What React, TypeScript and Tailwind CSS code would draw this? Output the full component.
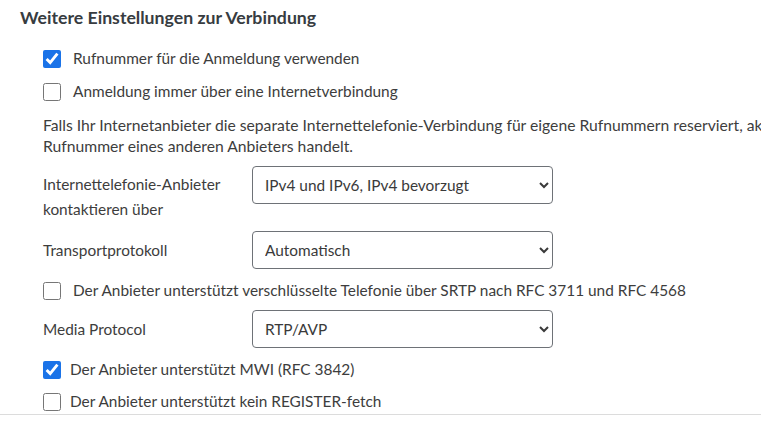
import { useState } from "react";

interface CheckRowProps {
  label: string;
  checked?: boolean;
  gap: string;
  className?: string;
}

function CheckRow({ label, checked, gap, className }: CheckRowProps) {
  const [on, setOn] = useState(!!checked);
  return (
    <label className={`flex items-center h-6 ${gap} ${className ?? ""}`}>
      <input
        type="checkbox"
        checked={on}
        onChange={() => setOn(!on)}
        className="w-[18px] h-[18px] m-0 accent-[#1a73e8] shrink-0"
      />
      <span className="whitespace-nowrap">{label}</span>
    </label>
  );
}

interface SelectRowProps {
  label: React.ReactNode;
  value: string;
  options: string[];
  className?: string;
  alignTop?: boolean;
}

function SelectRow({ label, value, options, className, alignTop }: SelectRowProps) {
  return (
    <div className={`flex ${alignTop ? "items-start" : "items-center"} ${className ?? ""}`}>
      <div className={`w-[209px] shrink-0 leading-[25px] ${alignTop ? "pt-[6px]" : ""}`}>{label}</div>
      <select
        defaultValue={value}
        className="w-[301px] h-[38px] border border-[#6e7277] rounded-[4px] pl-2 pr-2 bg-white text-[#3a3a3a]"
      >
        {options.map((o) => (
          <option key={o}>{o}</option>
        ))}
      </select>
    </div>
  );
}

export default function App() {
  return (
    <div
      className="w-[761px] h-[433px] overflow-hidden bg-white text-[#3d3d3d] text-[15.4px]"
      style={{ fontFamily: "Lato, 'Open Sans', sans-serif" }}
    >
      <div className="pt-[6px] border-b border-[#dcdcdc] pb-0">
        <h2 className="pl-5 text-[17.7px] leading-6 font-bold text-[#373c41] whitespace-nowrap">
          Weitere Einstellungen zur Verbindung
        </h2>

        <div className="pl-[43px] w-[1100px]">
          {/* Login options */}
          <CheckRow className="mt-[17px]" gap="gap-3" checked label="Rufnummer für die Anmeldung verwenden" />
          <CheckRow className="mt-[9px]" gap="gap-3" label="Anmeldung immer über eine Internetverbindung" />

          <p className="mt-[11px] leading-[21px] text-[15.7px]">
            <span className="whitespace-nowrap">
              Falls Ihr Internetanbieter die separate Internettelefonie-Verbindung für eigene Rufnummern reserviert, aktivieren Sie diese Option, wenn es sich um eine
            </span>
            <br />
            Rufnummer eines anderen Anbieters handelt.
          </p>

          <SelectRow
            className="mt-[9px]"
            alignTop
            label={
              <>
                Internettelefonie-Anbieter
                <br />
                kontaktieren über
              </>
            }
            value="IPv4 und IPv6, IPv4 bevorzugt"
            options={["IPv4 und IPv6, IPv4 bevorzugt", "IPv4 und IPv6, IPv6 bevorzugt", "Nur IPv4", "Nur IPv6"]}
          />

          <SelectRow
            className="mt-[9px]"
            label="Transportprotokoll"
            value="Automatisch"
            options={["Automatisch", "UDP", "TCP", "TLS"]}
          />

          <CheckRow
            className="mt-[10px]"
            gap="gap-3"
            label="Der Anbieter unterstützt verschlüsselte Telefonie über SRTP nach RFC 3711 und RFC 4568"
          />

          <SelectRow
            className="mt-[7px]"
            label="Media Protocol"
            value="RTP/AVP"
            options={["RTP/AVP", "RTP/SAVP"]}
          />

          <CheckRow className="mt-[10px]" gap="gap-[9px]" checked label="Der Anbieter unterstützt MWI (RFC 3842)" />
          <CheckRow className="mt-[8px]" gap="gap-[9px]" label="Der Anbieter unterstützt kein REGISTER-fetch" />
        </div>
      </div>
    </div>
  );
}
